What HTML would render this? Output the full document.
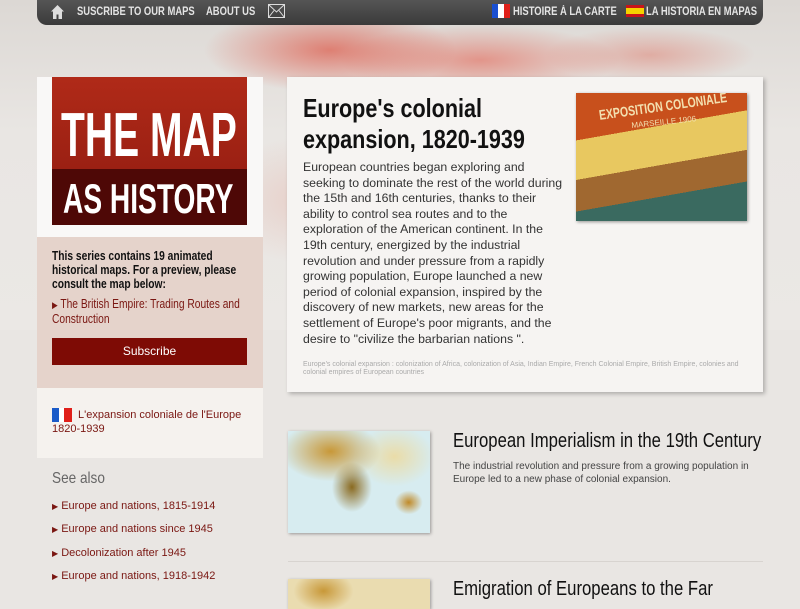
<!DOCTYPE html>
<html><head><meta charset="utf-8"><style>
*{margin:0;padding:0;box-sizing:border-box}
body{width:800px;height:600px;overflow:hidden;background:#e9e6e3;font-family:"Liberation Sans",sans-serif;position:relative}
.n{white-space:nowrap;transform-origin:0 0;display:inline-block}
.bgtex{position:absolute;left:0;top:0;width:800px;height:330px;background:
radial-gradient(ellipse 180px 60px at 330px 50px,rgba(220,50,30,.55),transparent 70%),
radial-gradient(ellipse 200px 50px at 480px 60px,rgba(225,60,40,.45),transparent 70%),
radial-gradient(ellipse 150px 40px at 650px 55px,rgba(220,80,60,.35),transparent 70%),
radial-gradient(ellipse 120px 90px at 300px 200px,rgba(220,120,100,.2),transparent 70%),
linear-gradient(#dcd8d4,#e9e6e3 40%,#ebe8e5)}
.nav{position:absolute;left:37px;top:0;width:726px;height:25px;background:linear-gradient(#555,#3a3a3a);border-radius:0 0 10px 10px;color:#e4e4e4;font-size:11.5px;font-weight:bold}
.nav span{position:absolute;top:6px;white-space:nowrap;transform:scaleX(.82);transform-origin:0 0}
.logo{position:absolute;left:37px;top:77px;width:226px;height:160px;background:#f9f8f7}
.logoi{position:absolute;left:15px;top:0;width:195px;height:148px;background:linear-gradient(#b02a18,#8e1a10);color:#fff;font-weight:bold;overflow:hidden}
.logoi .b{position:absolute;left:0;top:92px;width:195px;height:56px;background:#4e0806}
.pink{position:absolute;left:37px;top:237px;width:226px;height:151px;background:#e5d3cb}
.lt{position:absolute;left:37px;top:388px;width:226px;height:70px;background:#f5f2ee}
.red{color:#7a1712}
.card{position:absolute;left:287px;top:77px;width:476px;height:315px;background:#f6f4f2;box-shadow:2px 2px 4px rgba(0,0,0,.25)}
</style></head><body>
<div class="bgtex"></div>
<div class="nav">
<svg style="position:absolute;left:14px;top:5px" width="13" height="14" viewBox="0 0 13 14"><path d="M6.5 0L0 6.5h2V14h3.5V9.5h2V14H11V6.5h2z" fill="#ddd"/></svg>
<span style="left:40px">SUSCRIBE TO OUR MAPS</span><span style="left:169px">ABOUT US</span>
<svg style="position:absolute;left:231px;top:4px" width="17" height="14"><rect x="0.5" y="0.5" width="16" height="13" fill="none" stroke="#ddd"/><path d="M.5 .5L8.5 8L16.5 .5M.5 13.5L6 6.5M16.5 13.5L11 6.5" stroke="#ddd" fill="none"/></svg>
<div style="position:absolute;left:455px;top:4px;width:18px;height:14px;background:linear-gradient(90deg,#1a4fd0 33%,#fff 33% 66%,#e0201a 66%)"></div>
<span style="left:476px">HISTOIRE À LA CARTE</span>
<div style="position:absolute;left:589px;top:5px;width:18px;height:12px;background:linear-gradient(#c8141a 25%,#f5d200 25% 75%,#c8141a 75%)"></div>
<span style="left:609px">LA HISTORIA EN MAPAS</span>
</div>
<div class="logo"><div class="logoi"><div class="b"></div>
<div class="n" style="position:absolute;left:9px;top:26px;font-size:62px;line-height:66px;transform:scaleX(.63)">THE MAP</div>
<div class="n" style="position:absolute;left:11px;top:99px;font-size:42px;line-height:46px;transform:scaleX(.67)">AS HISTORY</div></div></div>
<div class="pink">
<div style="position:absolute;left:15px;top:12px;width:240px;transform:scaleX(.82);transform-origin:0 0">
<div style="font-size:12.5px;font-weight:bold;color:#111;line-height:14px">This series contains 19 animated historical maps. For a preview, please consult the map below:</div>
<div class="red" style="font-size:12.5px;line-height:14px;margin-top:6px"><span style="font-size:9px">▶</span> The British Empire: Trading Routes and Construction</div>
</div>
<div style="position:absolute;left:15px;top:101px;width:195px;height:27px;background:#7e0b05;color:#fff;text-align:center;font-size:12px;line-height:27px">Subscribe</div>
</div>
<div class="lt">
<div style="position:absolute;left:15px;top:20px;width:20px;height:14px;background:linear-gradient(90deg,#1a5bc8 35%,#fff 35% 60%,#e0201a 60%)"></div>
<div class="red" style="position:absolute;left:15px;top:20px;font-size:11px;line-height:14px;width:200px;text-indent:26px">L'expansion coloniale de l'Europe 1820-1939</div>
</div>
<div class="n" style="position:absolute;left:52px;top:470px;font-size:16px;color:#666;transform:scaleX(.85)">See also</div>
<div class="red" style="position:absolute;left:52px;top:495px;font-size:11px;line-height:23.3px">
<div><span style="font-size:8px">▶</span> Europe and nations, 1815-1914</div>
<div><span style="font-size:8px">▶</span> Europe and nations since 1945</div>
<div><span style="font-size:8px">▶</span> Decolonization after 1945</div>
<div><span style="font-size:8px">▶</span> Europe and nations, 1918-1942</div>
</div>
<div class="card">
<div class="n" style="position:absolute;left:16px;top:16px;font-size:26px;font-weight:bold;line-height:31px;color:#111;transform:scaleX(.83)">Europe's colonial<br>expansion, 1820-1939</div>
<div style="position:absolute;left:16px;top:83px;width:262px;font-size:12.3px;line-height:15.6px;color:#333">European countries began exploring and seeking to dominate the rest of the world during the 15th and 16th centuries, thanks to their ability to control sea routes and to the exploration of the American continent. In the 19th century, energized by the industrial revolution and under pressure from a rapidly growing population, Europe launched a new period of colonial expansion, inspired by the discovery of new markets, new areas for the settlement of Europe's poor migrants, and the desire to "civilize the barbarian nations ".</div>
<div style="position:absolute;left:16px;top:284px;width:450px;font-size:7px;line-height:7.5px;color:#aaa">Europe's colonial expansion : colonization of Africa, colonization of Asia, Indian Empire, French Colonial Empire, British Empire, colonies and colonial empires of European countries</div>
<div style="position:absolute;left:289px;top:16px;width:171px;height:128px;background:linear-gradient(170deg,#c8501c 0 30%,#e8c860 30% 55%,#a06830 55% 75%,#3a6a60 75%);box-shadow:1px 1px 3px rgba(0,0,0,.4);overflow:hidden">
<div class="n" style="position:absolute;left:22px;top:14px;color:#f3e0b0;font-weight:bold;font-size:14px;transform:rotate(-8deg) scaleX(.75)">EXPOSITION COLONIALE</div>
<div class="n" style="position:absolute;left:55px;top:28px;color:#f3e0b0;font-size:8px;transform:rotate(-6deg)">MARSEILLE 1906</div></div>
</div>
<div style="position:absolute;left:288px;top:431px;width:142px;height:102px;background:radial-gradient(ellipse 50px 30px at 30% 20%,#c89838,transparent),radial-gradient(ellipse 40px 30px at 75% 25%,#eadca8,transparent),radial-gradient(ellipse 20px 25px at 45% 55%,#8a6a20,transparent),radial-gradient(ellipse 14px 12px at 85% 70%,#c08a28,transparent),#d7ecf0;box-shadow:1px 1px 3px rgba(0,0,0,.35)"></div>
<div class="n" style="position:absolute;left:453px;top:430px;font-size:20px;color:#111;transform:scaleX(.835)">European Imperialism in the 19th Century</div>
<div style="position:absolute;left:453px;top:460px;width:320px;font-size:10px;line-height:13px;color:#444">The industrial revolution and pressure from a growing population in Europe led to a new phase of colonial expansion.</div>
<div style="position:absolute;left:288px;top:561px;width:475px;height:1px;background:#d8d4d0"></div>
<div style="position:absolute;left:288px;top:579px;width:142px;height:30px;background:radial-gradient(ellipse 30px 20px at 25% 40%,#c89838,transparent),#eadcb0;box-shadow:1px 1px 3px rgba(0,0,0,.35)"></div>
<div class="n" style="position:absolute;left:453px;top:578px;font-size:20px;color:#111;transform:scaleX(.835)">Emigration of Europeans to the Far</div>
</body></html>
